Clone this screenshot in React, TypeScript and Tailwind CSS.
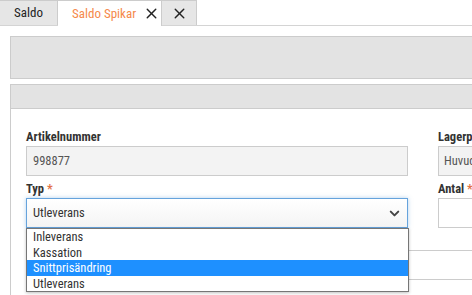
import { X, ChevronDown } from 'lucide-react';

const options = ['Inleverans', 'Kassation', 'Snittprisändring', 'Utleverans'];

export default function App() {
  return (
    <div className="w-[472px] h-[295px] overflow-hidden bg-white text-[12.5px] text-[#333] font-['Roboto_Condensed',Roboto,sans-serif]">
      {/* flikar */}
      <div className="flex h-[26px] border-b border-[#d4d4d4]">
        <div className="w-[58px] h-[25px] bg-[#e6e6e6] border-t border-r border-[#ccc] flex items-center justify-center text-[13px] text-[#222]">
          Saldo
        </div>
        <div className="w-[104px] h-[26px] bg-white border-t border-r border-[#ccc] flex items-center pl-[14px] gap-[7px] text-[13px] text-[#f5894a] -mb-px">
          <span>Saldo Spikar</span>
          <X className="w-[17px] h-[17px] text-[#222]" strokeWidth={2} />
        </div>
        <div className="w-[35px] h-[25px] bg-[#e6e6e6] border-t border-r border-[#ccc] flex items-center justify-center">
          <X className="w-[17px] h-[17px] text-[#222]" strokeWidth={2} />
        </div>
      </div>

      <div className="pl-[10px] pt-[10px]">
        <div className="h-[43px] bg-[#e3e3e3] border border-r-0 border-[#ccc]" />

        <div className="mt-[5px] border-l border-t border-[#ccc] h-[300px]">
          <div className="h-[24px] bg-[#e3e3e3] border-b border-[#ccc]" />

          <div className="pl-[15px] pt-[19px] flex gap-[30px]">
            {/* vänster kolumn */}
            <div className="w-[382px] shrink-0">
              <label className="block font-bold leading-[17px] mb-px text-[#333]">Artikelnummer</label>
              <div className="h-[30px] bg-[#f3f3f3] border border-[#ccc] flex items-center px-[6px] text-[#555]">
                998877
              </div>

              <label className="block font-bold leading-[17px] mt-[4px] mb-px text-[#333]">
                Typ <span className="text-[#e2734a]">*</span>
              </label>
              <div className="relative">
                <div className="h-[30px] border border-[#66a3dc] bg-gradient-to-b from-white to-[#f4f4f4] flex items-center justify-between pl-[6px] pr-[5px] shadow-[0_0_4px_rgba(102,163,220,0.5)]">
                  <span className="text-[#333]">Utleverans</span>
                  <ChevronDown className="w-[15px] h-[15px] text-[#444]" strokeWidth={3.2} />
                </div>
                <div className="absolute left-0 top-[30px] w-[383px] bg-white border border-[#767676] z-10 shadow-[0_1px_3px_rgba(0,0,0,0.25)]">
                  {options.map(o => (
                    <div
                      key={o}
                      className={
                        o === 'Snittprisändring'
                          ? 'h-[15.5px] leading-[15.5px] px-[6px] bg-[#1e90ff] text-white'
                          : 'h-[15.5px] leading-[15.5px] px-[6px] text-[#333]'
                      }
                    >
                      {o}
                    </div>
                  ))}
                </div>
              </div>
            </div>

            {/* höger kolumn */}
            <div className="w-[120px] shrink-0">
              <label className="block font-bold leading-[17px] mb-px text-[#333] whitespace-nowrap">Lagerplats</label>
              <div className="h-[30px] bg-[#f3f3f3] border border-[#ccc] flex items-center px-[5px] text-[#555] whitespace-nowrap">
                Huvudlager
              </div>
              <label className="block font-bold leading-[17px] mt-[4px] mb-px text-[#333]">
                Antal <span className="text-[#e2734a]">*</span>
              </label>
              <div className="h-[30px] bg-white border border-[#ccc]" />
            </div>
          </div>

          {/* tabellrader bakom listan */}
          <div className="ml-[15px] mt-[22px] border-t border-b border-[#ccc] h-[30px]" />
        </div>
      </div>
    </div>
  );
}
